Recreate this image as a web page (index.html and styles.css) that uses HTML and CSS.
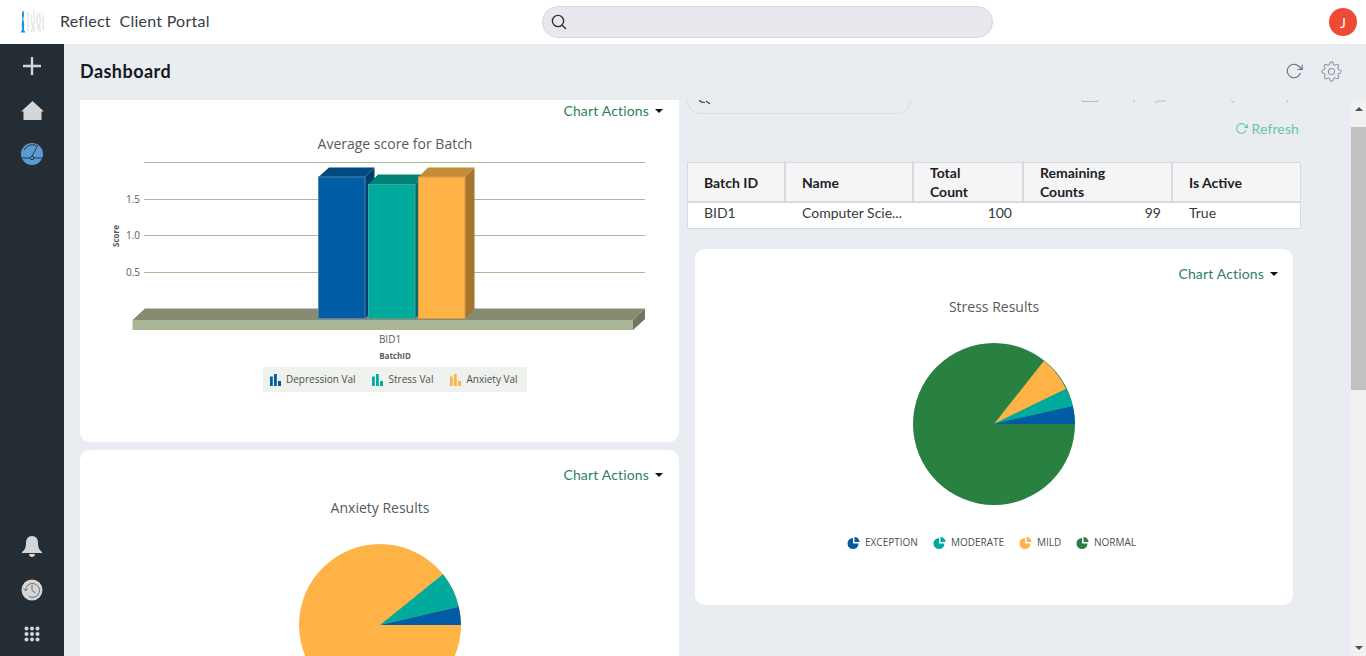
FILE: index.html
```html
<!DOCTYPE html>
<html lang="en">
<head>
<meta charset="utf-8">
<title>Reflect Client Portal</title>
<link rel="stylesheet" href="styles.css">
</head>
<body>
<div class="app">
  <header class="topbar">
    <div class="brand">
      <svg class="logo" viewBox="0 0 28 26" width="28" height="26">
        <path class="logo-faint" d="M9 3v19M12 6c2 3-1 6 1 9s-1 5 0 8M15 2c-2 4 2 7 0 11s1 6 0 10M18 5c2 3-2 6 0 9s0 6 1 8M21 3c-2 5 2 7 0 11s1 5 0 9M24 6c1 3-1 6 0 9s0 4 0 6"/>
        <path class="logo-blue" d="M3.500 2h1.200l.3 4-.6 4 .8 5-.3 6 1.600 2.500H1.500L3 21l-.3-6 .8-5-.6-4z"/>
      </svg>
      <span class="brand-name">Reflect&nbsp; Client Portal</span>
    </div>
    <div class="global-search">
      <svg class="search-icon" viewBox="0 0 16 16" width="16" height="16"><circle cx="7" cy="7" r="5.600"/><path d="M11 11l4 4"/></svg>
    </div>
    <div class="avatar">J</div>
  </header>

  <div class="body">
    <nav class="sidebar">
      <div class="nav-group">
        <div class="nav-item"><svg viewBox="0 0 20 20" width="20" height="20"><path class="nav-stroke" d="M10 1v18M1 10h18"/></svg></div>
        <div class="nav-item"><svg viewBox="0 0 24 20" width="23" height="19"><path class="nav-fill" d="M12 0L24 11h-2.500v9h-19v-9H0z"/></svg></div>
        <div class="nav-item"><svg viewBox="0 0 22 22" width="22" height="22"><circle class="gauge-face" cx="11" cy="11" r="11"/><path class="gauge-line" d="M3 7A9.500 9.500 0 0 1 17 3.500M16 4L10.500 14M1 15h8.500M12.500 15H21"/><circle class="gauge-line" cx="11" cy="15" r="1.700"/></svg></div>
      </div>
      <div class="nav-group">
        <div class="nav-item"><svg viewBox="0 0 20 21" width="20" height="21"><path class="nav-fill" d="M10 0c4 0 6 3 6 7 0 4 1 7 4 9v1H0v-1c3-2 4-5 4-9 0-4 2-7 6-7zM7 18h6c0 2-1.500 3-3 3s-3-1-3-3z"/></svg></div>
        <div class="nav-item"><svg viewBox="0 0 22 22" width="22" height="22"><circle class="nav-fill" cx="11" cy="11" r="10.500"/><path class="history-line" d="M4.500 11.500A7 7 0 1 1 8 17.500M2.500 9.500l2 2.300 2.300-2M11 6v5.500l3.500 2.500"/></svg></div>
        <div class="nav-item"><svg viewBox="0 0 16 16" width="16" height="16"><g class="nav-fill"><circle cx="2.500" cy="2.500" r="2"/><circle cx="8" cy="2.500" r="2"/><circle cx="13.500" cy="2.500" r="2"/><circle cx="2.500" cy="8" r="2"/><circle cx="8" cy="8" r="2"/><circle cx="13.500" cy="8" r="2"/><circle cx="2.500" cy="13.500" r="2"/><circle cx="8" cy="13.500" r="2"/><circle cx="13.500" cy="13.500" r="2"/></g></svg></div>
      </div>
    </nav>

    <main class="main">
      <div class="page-header">
        <h1 class="page-title">Dashboard</h1>
        <div class="page-tools">
          <svg class="tool-icon tool-refresh" viewBox="0 0 24 24" width="18" height="18"><path d="M23 4v6h-6"/><path d="M20.490 15a9 9 0 1 1-2.120-9.360L23 10"/></svg>
          <svg class="tool-icon tool-gear" viewBox="0 0 24 24" width="21" height="21"><circle cx="12" cy="12" r="3.500"/><path d="M19.400 15a1.650 1.650 0 0 0 .33 1.820l.06.06a2 2 0 0 1 0 2.830 2 2 0 0 1-2.830 0l-.06-.06a1.650 1.650 0 0 0-1.820-.33 1.650 1.650 0 0 0-1 1.510V21a2 2 0 0 1-2 2 2 2 0 0 1-2-2v-.09A1.650 1.650 0 0 0 9 19.400a1.650 1.650 0 0 0-1.820.33l-.06.06a2 2 0 0 1-2.830 0 2 2 0 0 1 0-2.830l.06-.06a1.650 1.650 0 0 0 .33-1.820 1.650 1.650 0 0 0-1.510-1H3a2 2 0 0 1-2-2 2 2 0 0 1 2-2h.09A1.650 1.650 0 0 0 4.600 9a1.650 1.650 0 0 0-.33-1.820l-.06-.06a2 2 0 0 1 0-2.830 2 2 0 0 1 2.830 0l.06.06a1.650 1.650 0 0 0 1.820.33H9a1.650 1.650 0 0 0 1-1.510V3a2 2 0 0 1 2-2 2 2 0 0 1 2 2v.09a1.650 1.650 0 0 0 1 1.510 1.650 1.650 0 0 0 1.820-.33l.06-.06a2 2 0 0 1 2.830 0 2 2 0 0 1 0 2.830l-.06.06a1.650 1.650 0 0 0-.33 1.820V9a1.650 1.650 0 0 0 1.510 1H21a2 2 0 0 1 2 2 2 2 0 0 1-2 2h-.09a1.650 1.650 0 0 0-1.510 1z"/></svg>
        </div>
      </div>

      <div class="workspace">
        <div class="columns">
          <section class="column-left">
            <article class="card card-batch">
              <div class="chart-actions"><span>Chart Actions</span><i class="caret"></i></div>
              <svg class="chart" viewBox="80 122 599 320" width="599" height="320">
                <defs>
                  <g id="bar-glyph"><rect x="0" y="2.500" width="2.800" height="9.500"/><rect x="4" y="0" width="2.800" height="12"/><rect x="8" y="7" width="3" height="5"/></g>
                </defs>
                <text class="chart-title" x="395" y="149" text-anchor="middle">Average score for Batch</text>
                <path class="grid" d="M144 162.500H645M144 199.500H645M144 235.500H645M144 272.500H645"/>
                <text class="axis" x="140" y="203" text-anchor="end">1.5</text>
                <text class="axis" x="140" y="239" text-anchor="end">1.0</text>
                <text class="axis" x="140" y="275.500" text-anchor="end">0.5</text>
                <text class="axis-name" transform="translate(119 236) rotate(-90)" text-anchor="middle">Score</text>
                <polygon class="floor-top" points="132.500,320 145,308.500 645,308.500 633,320"/>
                <rect class="floor-front" x="132.500" y="320" width="500.500" height="10"/>
                <polygon class="floor-side" points="633,320 645,308.500 645,319 633,330"/>
                <polygon class="blue-top" points="318.500,177 329,167.500 374.500,167.500 365,177"/>
                <polygon class="blue-side" points="365,177 374.500,167.500 374.500,309 365,318.500"/>
                <rect class="blue-front" x="318.500" y="177" width="46.500" height="141.500"/>
                <polygon class="teal-top" points="368.500,184.500 378,174.500 424.500,174.500 415,184.500"/>
                <polygon class="teal-side" points="415,184.500 424.500,174.500 424.500,309 415,318.500"/>
                <rect class="teal-front" x="368.500" y="184.500" width="46.500" height="134"/>
                <polygon class="amber-top" points="418.500,177 428,167.500 474.500,167.500 465,177"/>
                <polygon class="amber-side" points="465,177 474.500,167.500 474.500,309 465,318.500"/>
                <rect class="amber-front" x="418.500" y="177" width="46.500" height="141.500"/>
                <text class="axis" x="390" y="343" text-anchor="middle">BID1</text>
                <text class="axis-name" x="395" y="359" text-anchor="middle">BatchID</text>
                <rect class="legend-box" x="263" y="367" width="264" height="25"/>
                <use href="#bar-glyph" class="swatch-blue" x="270" y="374"/>
                <text class="legend" x="286" y="383">Depression Val</text>
                <use href="#bar-glyph" class="swatch-teal" x="372" y="374"/>
                <text class="legend" x="388.500" y="383">Stress Val</text>
                <use href="#bar-glyph" class="swatch-amber" x="450" y="374"/>
                <text class="legend" x="466.500" y="383">Anxiety Val</text>
              </svg>
            </article>
            <article class="card card-anxiety">
              <div class="chart-actions"><span>Chart Actions</span><i class="caret"></i></div>
              <svg class="chart" viewBox="80 486 599 320" width="599" height="320">
                <text class="chart-title" x="380" y="513" text-anchor="middle">Anxiety Results</text>
                <circle class="swatch-amber" cx="380" cy="625" r="81"/>
                <path class="swatch-teal" d="M380 625L458.700 606.700A81 81 0 0 0 443 574.300Z"/>
                <path class="swatch-blue" d="M380 625H461A81 81 0 0 0 458.700 606.700Z"/>
              </svg>
            </article>
          </section>

          <section class="column-right">
            <div class="grid-toolbar">
              <div class="grid-search"><svg class="grid-search-icon" viewBox="0 0 14 4" width="14" height="4"><path d="M0 0q2 2.500 6 2.500M7 1l4 3"/></svg></div>
              <svg class="toolbar-slivers" viewBox="0 0 220 4" width="220" height="4">
                <path d="M1 0v1.500h16V0M53 0v2.500M74 3q2-2.500 5-2h6M150 .5l2 2 2-2M206 2.500l1-2.500"/>
              </svg>
            </div>
            <div class="refresh-row">
              <a class="refresh-link"><svg viewBox="0 0 24 24" width="13" height="13"><path d="M23 4v6h-6"/><path d="M20.490 15a9 9 0 1 1-2.120-9.360L23 10"/></svg>Refresh</a>
            </div>
            <table class="batch-table">
              <thead>
                <tr>
                  <th class="col-id">Batch ID</th>
                  <th class="col-name">Name</th>
                  <th class="col-total">Total<br>Count</th>
                  <th class="col-remaining">Remaining<br>Counts</th>
                  <th class="col-active">Is Active</th>
                </tr>
              </thead>
              <tbody>
                <tr>
                  <td>BID1</td>
                  <td class="cell-name">Computer Scie...</td>
                  <td class="cell-number">100</td>
                  <td class="cell-number">99</td>
                  <td>True</td>
                </tr>
              </tbody>
            </table>
            <article class="card card-stress">
              <div class="chart-actions"><span>Chart Actions</span><i class="caret"></i></div>
              <svg class="chart" viewBox="695 285 598 320" width="598" height="320">
                <defs>
                  <g id="pie-glyph"><path d="M5 1V6.500H10.500A5.500 5.500 0 1 1 5 1Z"/><path d="M6.500 0A5 5 0 0 1 11.500 5H6.500Z"/></g>
                </defs>
                <text class="chart-title" x="994" y="312" text-anchor="middle">Stress Results</text>
                <circle class="swatch-green" cx="994" cy="424" r="81"/>
                <path class="swatch-amber" d="M994 424L1066 389A81 81 0 0 0 1044 360.700Z"/>
                <path class="swatch-teal" d="M994 424L1072.700 406.300A81 81 0 0 0 1066 389Z"/>
                <path class="swatch-blue" d="M994 424H1075A81 81 0 0 0 1072.700 406.300Z"/>
                <use href="#pie-glyph" class="swatch-blue" x="848" y="537"/>
                <text class="pie-legend" x="865" y="546">EXCEPTION</text>
                <use href="#pie-glyph" class="swatch-teal" x="934" y="537"/>
                <text class="pie-legend" x="951" y="546">MODERATE</text>
                <use href="#pie-glyph" class="swatch-amber" x="1020" y="537"/>
                <text class="pie-legend" x="1037" y="546">MILD</text>
                <use href="#pie-glyph" class="swatch-green" x="1077" y="537"/>
                <text class="pie-legend" x="1094" y="546">NORMAL</text>
              </svg>
            </article>
          </section>
        </div>

        <div class="scrollbar">
          <div class="scroll-button"><i class="arrow-up"></i></div>
          <div class="scroll-thumb"></div>
          <div class="scroll-space"></div>
          <div class="scroll-button"><i class="arrow-down"></i></div>
        </div>
      </div>
    </main>
  </div>
</div>
</body>
</html>
```

FILE: styles.css
```css
* { box-sizing: border-box; }
html, body { margin: 0; height: 100%; overflow: hidden; }
body { font-family: "Lato", "Noto Sans", sans-serif; color: #222; background: #e9edf1; }

.app { display: flex; flex-direction: column; height: 656px; }

/* top bar */
.topbar {
  flex: 0 0 44px;
  display: grid;
  grid-template-columns: 542px 451px 1fr;
  align-items: center;
  background: #fff;
}
.brand { display: flex; align-items: center; padding-left: 19px; }
.logo { margin-right: 13px; }
.logo-faint { fill: none; stroke: #e4e7ea; stroke-width: 1.5; }
.logo-blue { fill: #1496d8; }
.brand-name { font-size: 16px; color: #333c45; letter-spacing: .25px; padding-bottom: 4px; }
.global-search {
  height: 32px;
  display: flex;
  align-items: center;
  padding-left: 8px;
  background: #e8e9ee;
  border: 1px solid #d5d9e0;
  border-radius: 16px;
}
.search-icon { fill: none; stroke: #333; stroke-width: 1.4; }
.avatar {
  justify-self: end;
  margin-right: 9px;
  width: 28px;
  height: 28px;
  border-radius: 50%;
  background: #ee4b35;
  color: #fff;
  font-size: 14px;
  display: flex;
  align-items: center;
  justify-content: center;
}

/* shell */
.body { flex: 1; min-height: 0; display: flex; }
.sidebar {
  flex: 0 0 64px;
  display: flex;
  flex-direction: column;
  justify-content: space-between;
  background: #242c34;
}
.nav-group { display: flex; flex-direction: column; }
.nav-item { height: 44px; display: flex; align-items: center; justify-content: center; }
.nav-stroke { fill: none; stroke: #d6d6d6; stroke-width: 2.400; }
.nav-fill { fill: #d6d6d6; }
.gauge-face { fill: #5b9bd5; }
.gauge-line { fill: none; stroke: #2c3640; stroke-width: 1; }
.history-line { fill: none; stroke: #6d7276; stroke-width: 1; }

.main { flex: 1; min-width: 0; display: flex; flex-direction: column; }
.page-header {
  flex: 0 0 56px;
  display: flex;
  align-items: center;
  justify-content: space-between;
  padding: 0 24px 2px 16px;
}
.page-title { margin: 0; font-size: 18px; font-weight: 700; letter-spacing: .45px; color: #15191d; }
.page-tools { display: flex; align-items: center; gap: 18px; }
.tool-icon { fill: none; stroke-linecap: round; stroke-linejoin: round; }
.tool-refresh { stroke: #68727c; stroke-width: 1.500; }
.tool-gear { stroke: #8f979f; stroke-width: 1.200; }

.workspace { flex: 1; min-height: 0; display: flex; }
.columns { flex: 1; min-width: 0; overflow: hidden; display: flex; gap: 8px; padding-left: 16px; }
.column-left { flex: 0 0 599px; display: flex; flex-direction: column; gap: 8px; }
.column-right { flex: 0 0 614px; }

/* cards */
.card { background: #fff; border-radius: 10px; flex: none; }
.card-batch { height: 342px; border-radius: 0 0 10px 10px; }
.card-anxiety { height: 400px; padding-top: 14px; }
.card-stress { height: 356px; margin: 20px 8px 0; padding-top: 14px; }
.card-stress .chart-actions { padding-right: 15px; }
.chart-actions {
  height: 22px;
  display: flex;
  align-items: center;
  justify-content: flex-end;
  gap: 6px;
  padding-right: 16px;
  font-size: 14px;
  letter-spacing: .16px;
  color: #2f7f63;
}
.chart-actions span { padding-bottom: 2px; }
.caret {
  width: 0;
  height: 0;
  border-left: 4px solid transparent;
  border-right: 4px solid transparent;
  border-top: 4px solid #111;
}
.chart { display: block; font-family: "Open Sans", sans-serif; }
.chart-title { font-size: 14px; fill: #555b60; }
.grid { fill: none; stroke: #abb898; stroke-width: 1; }
.axis { font-size: 10px; fill: #555b60; }
.axis-name { font-size: 8px; font-weight: 700; fill: #555b60; }
.legend { font-size: 10px; fill: #4a5055; }
.pie-legend { font-size: 10px; fill: #4a5055; }
.legend-box { fill: #eff1ec; }
.floor-top { fill: #858c72; }
.floor-front { fill: #abb698; }
.floor-side { fill: #6f7660; }
.blue-top { fill: #004a80; }
.blue-side { fill: #003e6e; }
.blue-front { fill: #005ca5; stroke: #4a86b5; stroke-width: 1; }
.teal-top { fill: #008177; }
.teal-side { fill: #006a61; }
.teal-front { fill: #00ab9e; stroke: #3fa79c; stroke-width: 1; }
.amber-top { fill: #c58c38; }
.amber-side { fill: #a5742d; }
.amber-front { fill: #ffb347; stroke: #dd9b45; stroke-width: 1; }
.swatch-blue { fill: #005ca5; }
.swatch-teal { fill: #00ab9e; }
.swatch-amber { fill: #ffb347; }
.swatch-green { fill: #288141; }

/* grid panel */
.grid-toolbar { height: 14px; display: flex; justify-content: space-between; }
.grid-search {
  width: 224px;
  height: 14px;
  padding-left: 11px;
  border: 1px solid #d8dde3;
  border-top: 0;
  border-radius: 0 0 16px 16px;
}
.grid-search-icon { display: block; fill: none; stroke: #444; stroke-width: 1.200; }
.toolbar-slivers { margin-left: 170px; fill: none; stroke: #8fd2bd; stroke-width: 1; }
.refresh-row { height: 48px; display: flex; justify-content: flex-end; padding: 4px 2px 0 0; }
.refresh-link {
  height: 20px;
  display: flex;
  align-items: center;
  gap: 4px;
  font-size: 14px;
  letter-spacing: .12px;
  color: #66c7a3;
}
.refresh-link svg { fill: none; stroke: #66c7a3; stroke-width: 2; }

.batch-table {
  width: 614px;
  table-layout: fixed;
  border-collapse: separate;
  border-spacing: 0;
  border: 1px solid #d5dae3;
  background: #fff;
  font-size: 14px;
}
.batch-table th {
  height: 40px;
  padding: 0 0 0 16px;
  text-align: left;
  font-weight: 700;
  line-height: 19px;
  color: #1c2126;
  background: #f5f5f6;
  border-right: 2px solid #d5dae3;
  border-bottom: 2px solid #d5dae3;
}
.batch-table th.col-active { border-right: 0; }
.batch-table td { height: 25px; padding: 0 0 7px 16px; color: #333a40; }
.col-id { width: 98px; }
.col-name { width: 128px; }
.col-total { width: 110px; }
.col-remaining { width: 149px; }
.batch-table td.cell-number { text-align: right; padding-right: 12px; padding-left: 0; }

/* scrollbar */
.scrollbar { flex: 0 0 15px; display: flex; flex-direction: column; background: #f1f1f1; }
.scroll-button { flex: 0 0 17px; display: flex; align-items: center; justify-content: center; }
.scroll-thumb { flex: 0 0 263px; margin-top: 10px; background: #c1c1c1; }
.scroll-space { flex: 1; }
.arrow-up, .arrow-down { width: 0; height: 0; border-left: 4px solid transparent; border-right: 4px solid transparent; }
.arrow-up { border-bottom: 4px solid #505050; }
.arrow-down { border-top: 4px solid #505050; }
```
